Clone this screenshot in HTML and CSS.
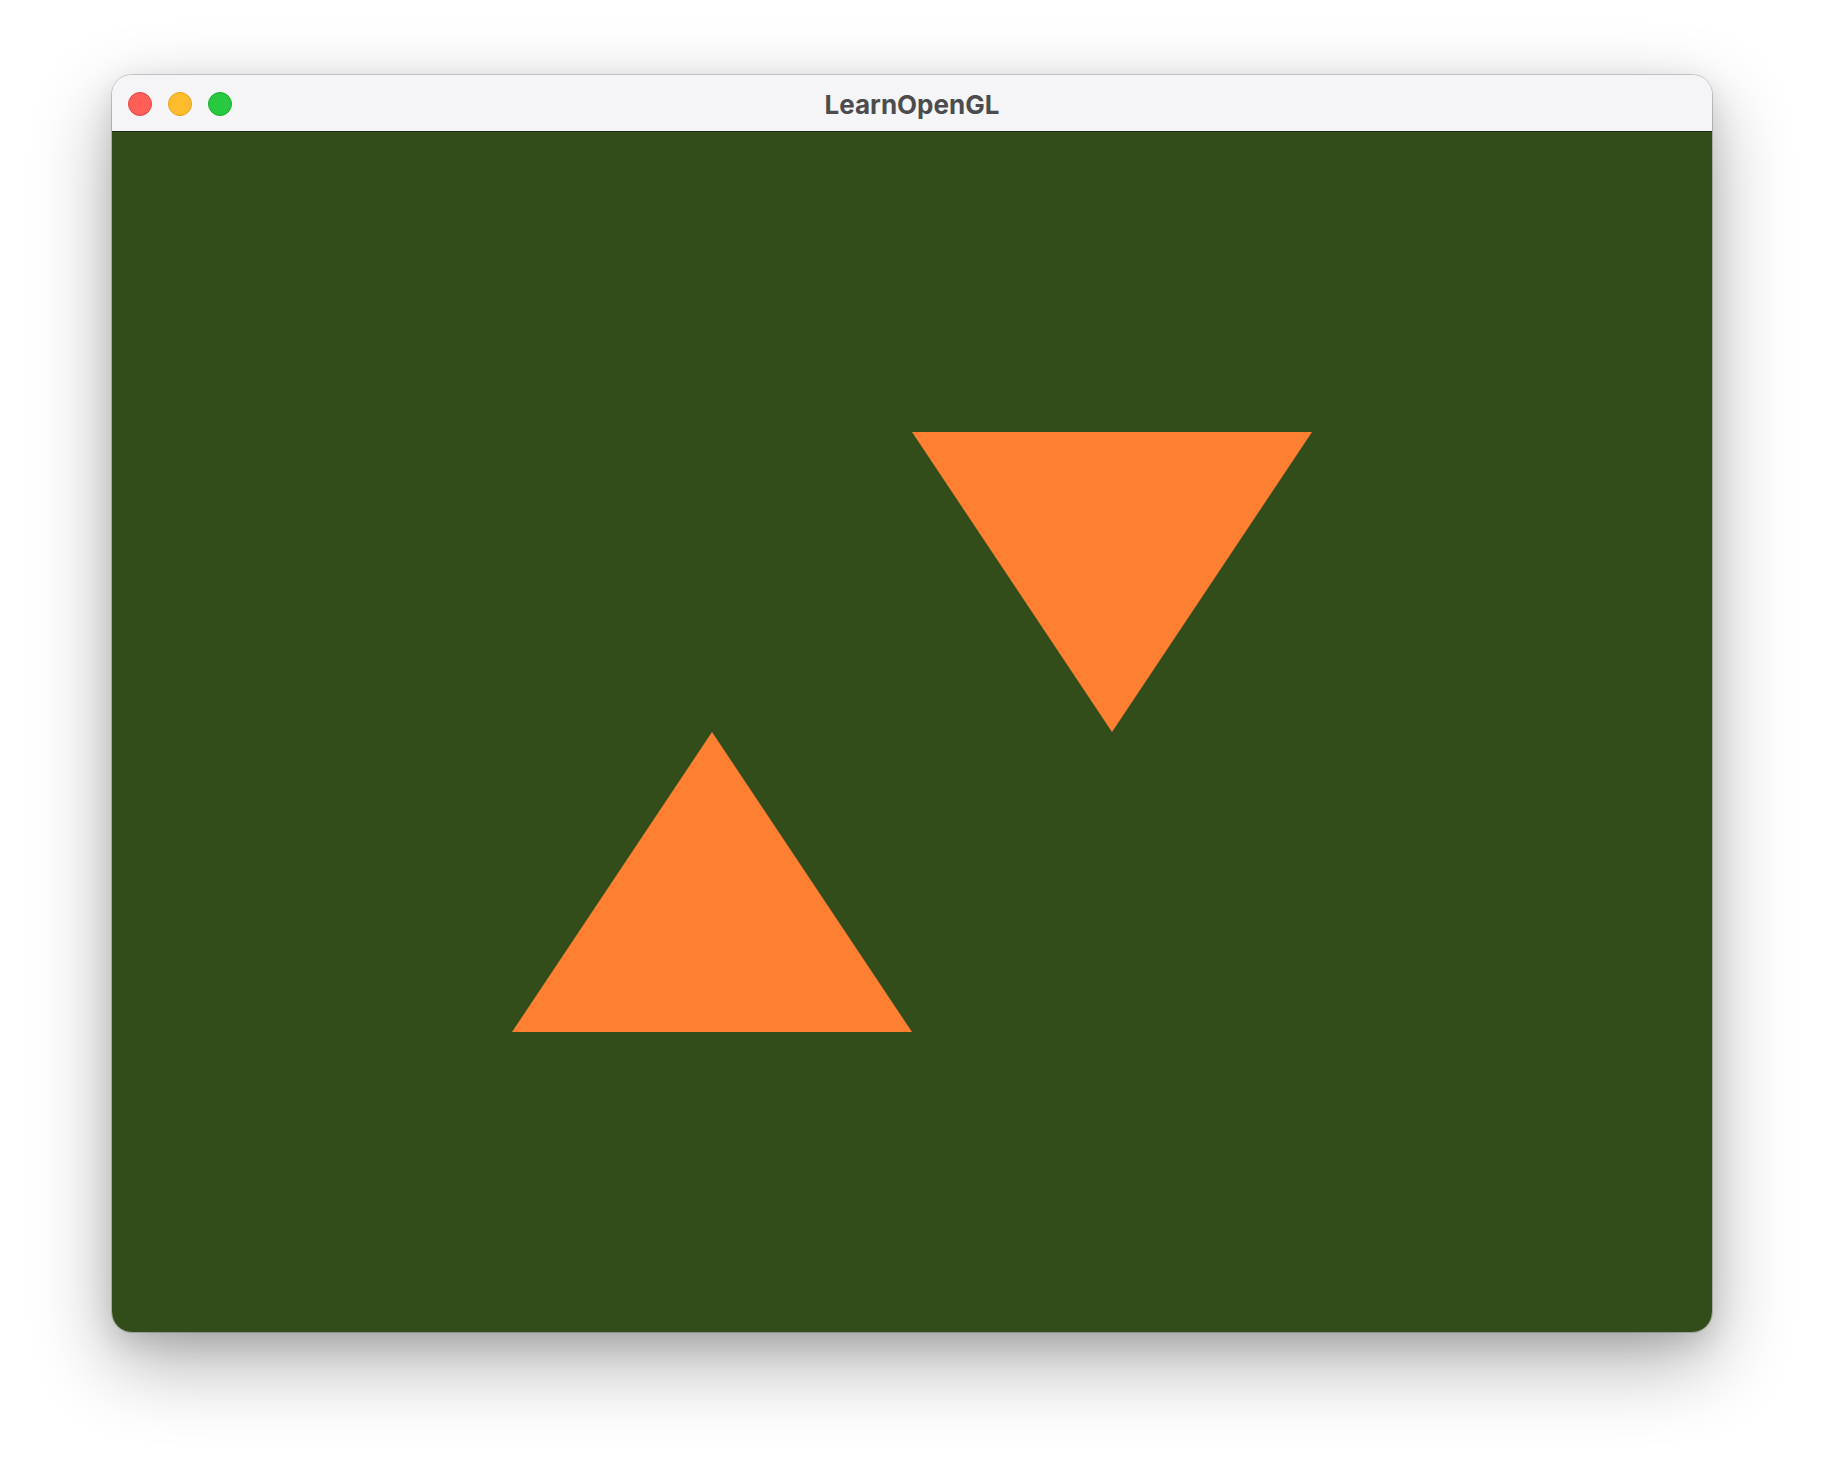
FILE: index.html
```html
<!DOCTYPE html>
<html>
<head>
<meta charset="utf-8">
<link rel="stylesheet" href="styles.css">
</head>
<body>
<div class="window">
  <div class="titlebar">
    <div class="lights">
      <span class="light red"></span>
      <span class="light yellow"></span>
      <span class="light green"></span>
    </div>
    <div class="title">LearnOpenGL</div>
  </div>
  <div class="content">
    <svg class="canvas" viewBox="0 0 1600 1200" width="1600" height="1200">
      <polygon points="800,300 1200,300 1000,600" fill="#ff8033"/>
      <polygon points="400,900 800,900 600,600" fill="#ff8033"/>
    </svg>
  </div>
</div>
</body>
</html>
```
FILE: styles.css
```css
html, body {
  margin: 0;
  background: #ffffff;
}
html {
  height: 100%;
}
body {
  box-sizing: border-box;
  min-height: 100%;
  padding: 75px 112px;
}
.window {
  width: 1600px;
  border-radius: 20px;
  overflow: hidden;
  box-shadow: 0 0 0 1px rgba(0,0,0,0.18), 0 30px 80px rgba(0,0,0,0.32), 0 10px 30px rgba(0,0,0,0.12);
  display: flex;
  flex-direction: column;
}
.titlebar {
  height: 56px;
  background: #f5f5f7;
  display: flex;
  align-items: center;
  position: relative;
  border-bottom: 1px solid #1a2a0c;
}
.lights {
  display: flex;
  gap: 16px;
  padding-left: 16px;
  padding-top: 1px;
}
.light {
  width: 24px;
  height: 24px;
  border-radius: 50%;
  box-sizing: border-box;
}
.red { background: #ff5f57; border: 1px solid #e2463f; }
.yellow { background: #febc2e; border: 1px solid #e1a116; }
.green { background: #28c840; border: 1px solid #14ae2a; }
.title {
  position: absolute;
  left: 0;
  right: 0;
  top: 0;
  bottom: 0;
  display: flex;
  align-items: center;
  justify-content: center;
  padding-top: 2px;
  font-family: Inter, "Liberation Sans", sans-serif;
  font-weight: 700;
  font-size: 26px;
  color: #4c4c4e;
}
.content {
  height: 1200px;
  background: #334d1a;
}
.canvas {
  display: block;
}
```
